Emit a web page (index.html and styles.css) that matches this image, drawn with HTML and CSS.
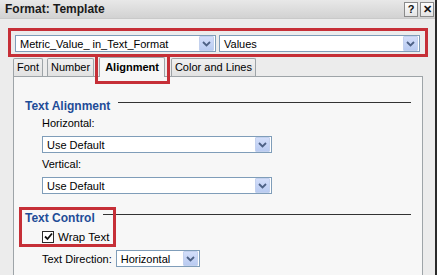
FILE: index.html
```html
<!DOCTYPE html>
<html lang="en">
    <head>
        <meta charset="UTF-8" />
        <title>Format: Template</title>
        <link rel="stylesheet" href="styles.css">
    </head>
    <body>
        <div class="window">
            <div class="titlebar">
                <span class="title">Format: Template</span>
                <div class="title-buttons">
                    <span class="tbtn">?</span>
                    <span class="tbtn">&#x2715;</span>
                </div>
            </div>
            <div class="content">
                <!-- objeto + parte -->
                <div class="picker">
                    <div class="combo combo-wide">
                        <span class="combo-text">Metric_Value_ in_Text_Format</span>
                        <span class="drop"><svg width="9" height="6" viewBox="0 0 9 6"><path d="M1 1 L4.5 4.5 L8 1" fill="none" stroke="#4d6185" stroke-width="1.8"/></svg></span>
                    </div>
                    <div class="combo combo-wide">
                        <span class="combo-text">Values</span>
                        <span class="drop"><svg width="9" height="6" viewBox="0 0 9 6"><path d="M1 1 L4.5 4.5 L8 1" fill="none" stroke="#4d6185" stroke-width="1.8"/></svg></span>
                    </div>
                </div>

                <div class="tabs">
                    <span class="tab">Font</span>
                    <span class="tab">Number</span>
                    <span class="tab active">Alignment<span class="callout callout-tab"></span></span>
                    <span class="tab">Color and Lines</span>
                </div>

                <div class="panel">
                    <div class="group-title"><span>Text Alignment</span><i class="rule"></i></div>
                    <div class="field">
                        <div class="label">Horizontal:</div>
                        <div class="combo combo-mid">
                            <span class="combo-text">Use Default</span>
                            <span class="drop"><svg width="9" height="6" viewBox="0 0 9 6"><path d="M1 1 L4.5 4.5 L8 1" fill="none" stroke="#4d6185" stroke-width="1.8"/></svg></span>
                        </div>
                        <div class="label">Vertical:</div>
                        <div class="combo combo-mid">
                            <span class="combo-text">Use Default</span>
                            <span class="drop"><svg width="9" height="6" viewBox="0 0 9 6"><path d="M1 1 L4.5 4.5 L8 1" fill="none" stroke="#4d6185" stroke-width="1.8"/></svg></span>
                        </div>
                    </div>

                    <div class="group-title group-second"><span>Text Control</span><i class="rule"></i></div>
                    <div class="field">
                        <label class="check-row">
                            <span class="checkbox"><svg width="9" height="9" viewBox="0 0 9 9"><path d="M1 4.5 L3.5 7 L8 1.5" fill="none" stroke="#111" stroke-width="1.8"/></svg></span>
                            Wrap Text
                        </label>
                        <div class="inline-row">
                            <span class="label-inline">Text Direction:</span>
                            <div class="combo combo-small">
                                <span class="combo-text">Horizontal</span>
                                <span class="drop"><svg width="9" height="6" viewBox="0 0 9 6"><path d="M1 1 L4.5 4.5 L8 1" fill="none" stroke="#4d6185" stroke-width="1.8"/></svg></span>
                            </div>
                        </div>
                    </div>
                    <span class="callout callout-control"></span>
                </div>
            </div>
        </div>
    </body>
</html>
```

FILE: styles.css
```css
* {
    box-sizing: border-box;
    margin: 0;
    padding: 0;
}
body {
    font-family: "Liberation Sans", Arial, sans-serif;
    font-size: 11px;
    color: #000;
    background: #ececec;
    width: 437px;
    height: 275px;
    overflow: hidden;
}
.window {
    width: 437px;
    height: 275px;
    background: #ececec;
    border-right: 2px solid #2a2a2a;
    display: flex;
    flex-direction: column;
}
.titlebar {
    height: 19px;
    flex: none;
    display: flex;
    align-items: center;
    justify-content: space-between;
    padding: 0 1px 0 5px;
    background: linear-gradient(#e8e8e8, #d2d2d2);
    border-bottom: 1px solid #c9c9c9;
}
.title {
    font-size: 12px;
    font-weight: bold;
    color: #1a1a1a;
}
.title-buttons {
    display: flex;
    gap: 2px;
}
.tbtn {
    width: 14px;
    height: 15px;
    display: flex;
    align-items: center;
    justify-content: center;
    font-weight: bold;
    font-size: 11px;
    background: linear-gradient(#fdfdfd, #e4e4e4);
    border: 1px solid #8a8a8a;
    color: #111;
}
.content {
    flex: 1;
    display: flex;
    flex-direction: column;
    padding: 9px 0 0 8px;
    min-height: 0;
}
/* caixa vermelha de destaque */
.picker {
    width: 420px;
    height: 29px;
    border: 3px solid #c62f37;
    display: flex;
    gap: 3px;
    padding: 4px 0 0 4px;
}
.combo {
    height: 17px;
    border: 1px solid #7f9db9;
    background: #fff;
    display: flex;
    align-items: center;
    justify-content: space-between;
}
.combo-text {
    padding-left: 4px;
    white-space: nowrap;
}
.combo-wide {
    width: 201px;
}
.combo-mid {
    width: 230px;
}
.combo-small {
    width: 84px;
}
.drop {
    width: 15px;
    height: 15px;
    margin-right: 1px;
    display: flex;
    align-items: center;
    justify-content: center;
    background: linear-gradient(#d3defa, #b9cbf1);
    border: 1px solid #c3d1ee;
    border-radius: 1px;
}
.tabs {
    display: flex;
    align-items: flex-end;
    height: 19px;
    margin-left: 5px;
    position: relative;
    z-index: 1;
}
.tab {
    height: 18px;
    line-height: 17px;
    padding: 0 3px;
    margin-right: 4px;
    background: linear-gradient(#f0f0f0, #e2e2e2);
    border: 1px solid #9ea4a8;
    border-bottom: none;
    border-radius: 2px 2px 0 0;
    white-space: nowrap;
}
.tab.active {
    position: relative;
    height: 20px;
    margin: 0 6px 0 1px;
    margin-bottom: -1px;
    padding: 1px 5px 0;
    font-weight: bold;
    background: #f7f7f7;
}
.callout {
    position: absolute;
    border: 3px solid #c62f37;
    pointer-events: none;
}
.callout-tab {
    left: -5px;
    top: -4px;
    width: 75px;
    height: 30px;
}
.panel {
    position: relative;
    width: 410px;
    flex: 1;
    margin-left: 5px;
    background: #f7f7f7;
    border: 1px solid #9ea4a8;
    border-bottom: none;
    padding: 22px 11px 0 11px;
}
.group-title {
    display: flex;
    align-items: flex-start;
    gap: 8px;
    font-size: 12px;
    font-weight: bold;
    color: #1f4c97;
    line-height: 14px;
}
.group-title .rule {
    flex: 1;
    height: 1px;
    margin-top: 3px;
    background: #333;
}
.group-second {
    margin-top: 17px;
}
.field {
    padding-left: 17px;
}
.label {
    line-height: 13px;
    margin-top: 4px;
    margin-bottom: 6px;
}
.field .label + .combo + .label {
    margin-top: 5px;
}
.check-row {
    display: flex;
    align-items: center;
    gap: 4px;
    height: 13px;
    margin-top: 5px;
    font-size: 11.5px;
}
.checkbox {
    width: 12px;
    height: 12px;
    border: 1px solid #2a2a2a;
    background: #fff;
    display: flex;
    align-items: center;
    justify-content: center;
}
.inline-row {
    display: flex;
    align-items: center;
    gap: 4px;
    margin-top: 7px;
}
.callout-control {
    left: 5px;
    top: 130px;
    width: 97px;
    height: 40px;
}
```
